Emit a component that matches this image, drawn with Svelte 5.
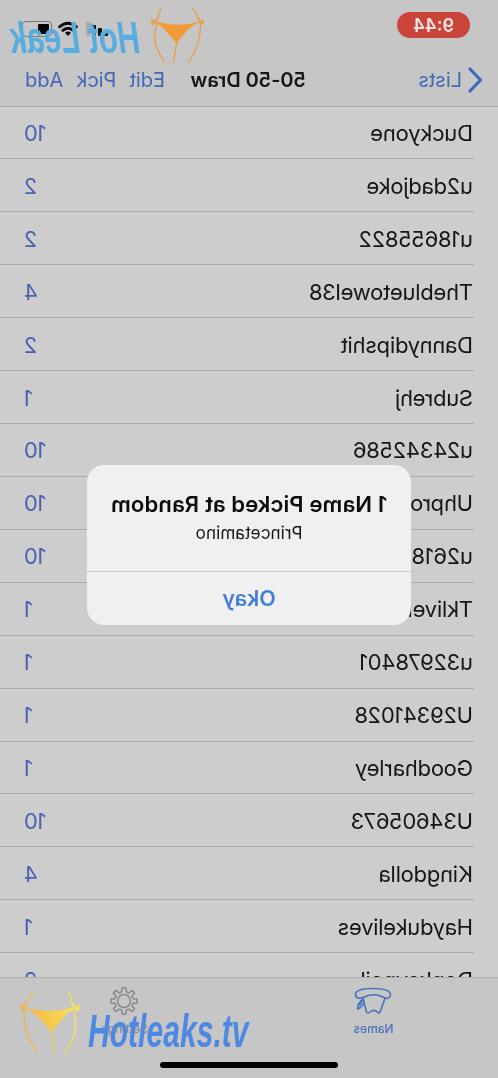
<script lang="ts">
	const entries = [
		{ name: 'Duckyone', count: 10 },
		{ name: 'u2dadjoke', count: 2 },
		{ name: 'u18655822', count: 2 },
		{ name: 'Thebluetowel38', count: 4 },
		{ name: 'Dannydipshit', count: 2 },
		{ name: 'Subrehj', count: 1 },
		{ name: 'u24342586', count: 10 },
		{ name: 'Uhpro', count: 10 },
		{ name: 'u2618', count: 10 },
		{ name: 'Tkliver', count: 1 },
		{ name: 'u32978401', count: 1 },
		{ name: 'U29341028', count: 1 },
		{ name: 'Goodharley', count: 1 },
		{ name: 'U34605673', count: 10 },
		{ name: 'Kingdolla', count: 4 },
		{ name: 'Haydukelives', count: 1 },
		{ name: 'Donkeyneil', count: 2 }
	];

	// eight teeth around the settings cog
	const teeth = [0, 45, 90, 135, 180, 225, 270, 315];
	const cog = teeth
		.map((deg, i) => {
			const pt = (r: number, d: number) => {
				const a = ((deg + d) * Math.PI) / 180;
				return `${(14 + r * Math.cos(a)).toFixed(2)} ${(14 + r * Math.sin(a)).toFixed(2)}`;
			};
			return `${i ? 'L' : 'M'}${pt(10, -12)} L${pt(13, -9)} Q${pt(13.6, 0)} ${pt(13, 9)} L${pt(10, 12)} Q${pt(8.4, 22.5)} ${pt(10, 33)}`;
		})
		.join(' ') + 'Z';
</script>

{#snippet figure()}
	<path class="line" d="M13 1 C9 5 9 9 5 14 M4 20 C4 40 9 48 17 62 M31 40 C32 48 34 55 34 62 M54 20 C59 41 53 48 45 62 M50 1 C47 5 54 7 51 11 L55 15" />
	<path class="line" d="M5 17 L1 14 L1 18 L5 17 L3 21 M6 17 L7 13 M54 17 L53 12 M55 17 L59 14 L59 18 L55 17 L58 20 M55 17 L51 20" />
	<path class="fill" d="M5 16 Q28 24 54 16 Q45 24 31 41 Q20 25 5 16Z" />
	<circle class="fill" cx="28" cy="14" r="0.9" />
{/snippet}

<div class="stage">
	<div class="screen">
		<header>
			<div class="status">
				<span class="time">9:44</span>
				<div class="indicators">
					<svg class="signal" viewBox="0 0 24 14">
						<rect x="0" y="9" width="4" height="5" rx="1" />
						<rect x="6" y="6" width="4" height="8" rx="1" />
						<rect x="12" y="3" width="4" height="11" rx="1" />
						<rect class="dim" x="18" y="0" width="4" height="14" rx="1" />
					</svg>
					<svg class="wifi" viewBox="0 0 20 14">
						<path d="M1.5 4.8 Q10 -2.2 18.5 4.8 M4.8 8.4 Q10 4 15.2 8.4" />
						<path class="dot" d="M7 10.8 Q10 8.4 13 10.8 L10 14Z" />
					</svg>
					<div class="battery"><i></i></div>
				</div>
			</div>
			<nav>
				<a class="back" href="#lists">
					<svg viewBox="0 0 15 26"><path d="M13 2 L2.5 13 L13 24" /></svg>
					<span>Lists</span>
				</a>
				<h1>50-50 Draw</h1>
				<div class="actions">
					<button>Edit</button>
					<button>Pick</button>
					<button>Add</button>
				</div>
			</nav>
		</header>

		<ul>
			{#each entries as entry}
				<li>
					<span>{entry.name}</span>
					<span class="count">{entry.count}</span>
				</li>
			{/each}
		</ul>

		<footer>
			<div class="tabs">
				<div class="tab active">
					<svg class="hat" viewBox="0 0 38 28">
						<path d="M1.5 7.5 C2 3 10 1.5 19 1.5 C28 1.5 36 3 36.5 7 C37 11.5 32 12 28 10 C21 7 14 7 8 10.5 C4.5 12.5 1.5 11 1.5 7.5Z" />
						<path d="M7 11.5 L12 25 Q12.5 26.5 14 25.5 Q18.5 21.5 22 25 Q24.5 27 25.5 25 L29 12" />
						<path d="M28.5 12 Q34 15 34.5 22 L31.5 20.5 Q27.5 17 28.5 12 M30 13 L32 18" />
					</svg>
					<span>Names</span>
				</div>
				<div class="tab">
					<svg class="cog" viewBox="0 0 28 28">
						<path d={cog} />
						<circle cx="14" cy="14" r="6.5" />
					</svg>
					<span>Settings</span>
				</div>
			</div>
			<div class="home"></div>
		</footer>

		<div class="dialog">
			<div class="message">
				<h2>1 Name Picked at Random</h2>
				<p>Princetamino</p>
			</div>
			<button>Okay</button>
		</div>

		<div class="mark top-mark">
			<svg class="orange" viewBox="0 0 60 63">{@render figure()}</svg>
			<span>Hot Leak</span>
		</div>
	</div>

	<div class="mark bottom-mark">
		<svg class="gold" viewBox="0 0 60 63">
			<defs>
				<linearGradient id="gold" gradientUnits="userSpaceOnUse" x1="0" y1="30" x2="56" y2="20">
					<stop offset="0" stop-color="#f6ad3c" />
					<stop offset="1" stop-color="#f8e35a" />
				</linearGradient>
			</defs>
			{@render figure()}
		</svg>
		<span>Hotleaks.tv</span>
	</div>
</div>

<style>
	:global(body) {
		margin: 0;
		background: #ccc;
	}

	.stage {
		position: relative;
		width: 498px;
		height: 1078px;
		overflow: hidden;
		font-family: Inter, 'Liberation Sans', sans-serif;
	}

	.screen {
		width: 100%;
		height: 100%;
		display: flex;
		flex-direction: column;
		background: #cdcdcd;
		color: #161616;
		transform: scaleX(-1);
	}

	svg {
		display: block;
		overflow: visible;
		fill: none;
		stroke-linecap: round;
		stroke-linejoin: round;
	}

	button {
		padding: 0;
		border: 0;
		background: none;
		font: inherit;
		color: inherit;
	}

	header {
		flex: none;
		height: 106.5px;
		box-sizing: border-box;
		background: #c6c6c6;
		border-bottom: 1px solid #acacac;
	}

	.status {
		display: flex;
		justify-content: space-between;
		align-items: flex-start;
		padding: 12px 22px 0 28px;
		height: 42px;
	}

	.time {
		width: 73px;
		height: 26px;
		border-radius: 13px;
		background: #cb4439;
		color: #f3e4e2;
		font-size: 18px;
		font-weight: 600;
		line-height: 27px;
		text-align: center;
	}

	.indicators {
		display: flex;
		align-items: center;
		gap: 6px;
		padding-top: 9px;
	}

	.signal {
		width: 24px;
		height: 14px;
		fill: #0a0a0a;
	}

	.signal .dim {
		fill: #aaa;
	}

	.wifi {
		width: 20px;
		height: 14px;
		stroke: #0a0a0a;
		stroke-width: 2.8;
	}

	.dot {
		fill: #0a0a0a;
		stroke: none;
	}

	.battery {
		width: 24px;
		height: 10px;
		padding: 2px;
		border: 1px solid #777;
		border-radius: 4px;
	}

	.battery i {
		display: block;
		width: 11px;
		height: 10px;
		border-radius: 1px;
		background: #000;
	}

	nav {
		display: grid;
		grid-template-columns: 192px 1fr auto;
		align-items: center;
		height: 52px;
		padding-right: 25px;
		font-size: 20px;
		color: #4468b7;
	}

	.back {
		display: flex;
		align-items: center;
		gap: 6px;
		padding-left: 15px;
		color: inherit;
		text-decoration: none;
	}

	.back svg {
		width: 15px;
		height: 26px;
		stroke: #3c6abf;
		stroke-width: 3.2;
	}

	h1 {
		margin: 0;
		font-size: 20px;
		font-weight: 600;
		letter-spacing: -0.1px;
		color: #161616;
	}

	.actions {
		display: flex;
		gap: 13px;
	}

	ul {
		flex: 1;
		min-height: 0;
		overflow: hidden;
		margin: 0;
		padding: 0 0 0 24px;
		list-style: none;
	}

	li {
		display: flex;
		justify-content: space-between;
		align-items: center;
		height: 52.93px;
		box-sizing: border-box;
		padding: 1px 24px 0 1px;
		border-bottom: 1px solid #aaa;
		font-size: 22px;
		letter-spacing: -0.25px;
	}

	.count {
		color: #4a62b0;
	}

	footer {
		flex: none;
		height: 101px;
		box-sizing: border-box;
		display: flex;
		flex-direction: column;
		align-items: center;
		justify-content: space-between;
		padding-bottom: 10px;
		background: #c6c6c6;
		border-top: 1px solid #adadad;
	}

	.tabs {
		display: flex;
		width: 100%;
	}

	.tab {
		display: flex;
		flex: 1;
		flex-direction: column;
		align-items: center;
		height: 60px;
		padding-top: 9px;
		box-sizing: border-box;
		font-size: 12px;
		font-weight: 500;
		color: #8b8b8b;
	}

	.tab svg {
		height: 28px;
		margin-bottom: 6px;
		stroke: currentColor;
		stroke-width: 1.6;
	}

	.tab.active {
		color: #4873bd;
	}

	.hat {
		width: 38px;
	}

	.cog {
		width: 28px;
	}

	.home {
		width: 178px;
		height: 6px;
		border-radius: 3px;
		background: #000;
	}

	.dialog {
		position: absolute;
		left: 87px;
		top: 465px;
		width: 324px;
		height: 160px;
		display: flex;
		flex-direction: column;
		border-radius: 17px;
		background: #f0f0f0;
		text-align: center;
	}

	.message {
		height: 107px;
		box-sizing: border-box;
		padding-top: 25px;
		border-bottom: 1px solid #cbcbcb;
	}

	h2 {
		margin: 0;
		font-size: 22px;
		font-weight: 600;
		line-height: 28px;
		letter-spacing: 0.15px;
		color: #0c0c0c;
		white-space: nowrap;
	}

	p {
		margin: 4px 0 0;
		font-size: 17px;
		line-height: 22px;
		letter-spacing: 0.1px;
	}

	.dialog button {
		flex: 1;
		padding-bottom: 2px;
		font-size: 21.5px;
		font-weight: 600;
		color: #437fd9;
	}

	.mark {
		position: absolute;
		display: flex;
		font-family: 'Liberation Sans', sans-serif;
		font-style: italic;
		font-weight: 700;
		white-space: nowrap;
	}

	.top-mark {
		left: 294px;
		top: 7px;
		color: #58ade0;
	}

	.top-mark span {
		margin-left: 11px;
		font-size: 44px;
		line-height: 62px;
		transform: scaleX(0.7);
		transform-origin: 0 50%;
	}

	.bottom-mark {
		left: 20px;
		top: 991px;
		color: #4d88e2;
	}

	.bottom-mark span {
		margin-left: 8px;
		font-size: 47px;
		line-height: 80px;
		transform: scaleX(0.64);
		transform-origin: 0 50%;
	}

	.orange {
		width: 53px;
		height: 56px;
	}

	.gold {
		width: 60px;
		height: 63px;
	}

	.line {
		stroke: #f29a35;
		stroke-width: 1.3;
	}

	.fill {
		fill: #f29a35;
	}

	.gold .line {
		stroke: url(#gold);
	}

	.gold .fill {
		fill: url(#gold);
	}
</style>
